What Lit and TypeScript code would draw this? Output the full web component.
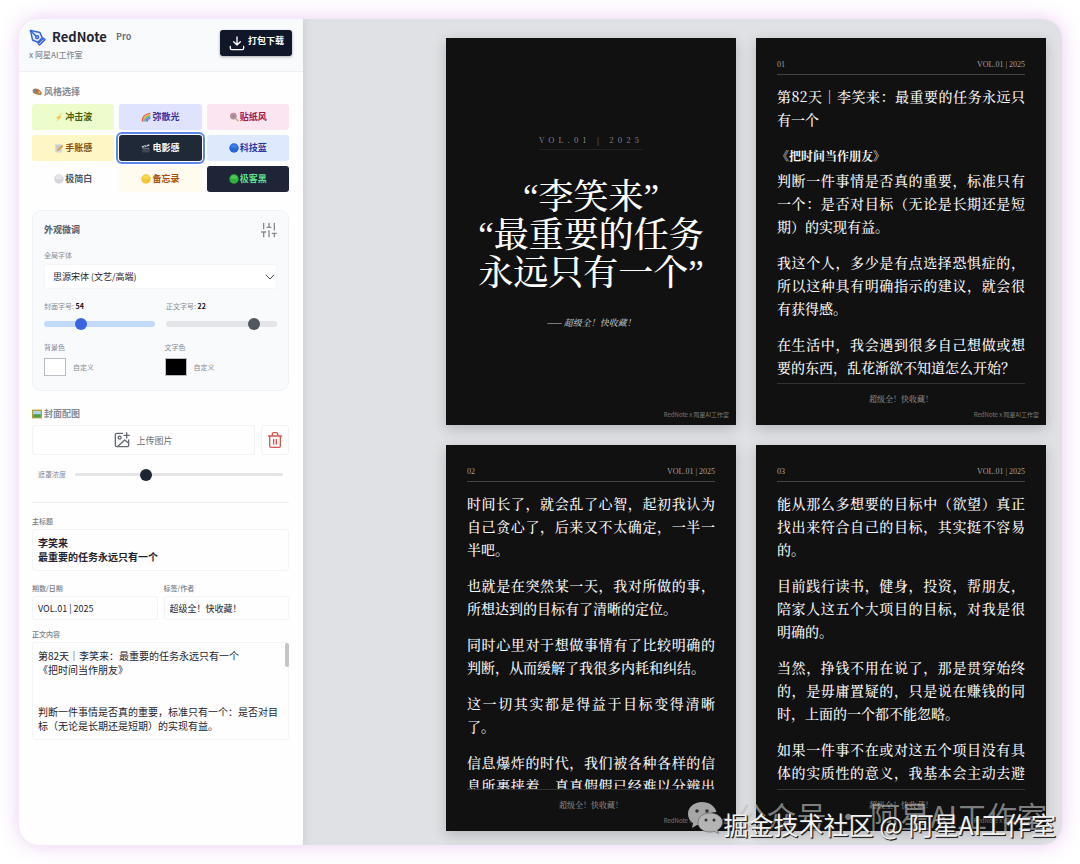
import { LitElement, html, css, svg, nothing } from "lit";
import { customElement, property } from "lit/decorators.js";

interface Theme {
  name: string;
  icon: unknown;
  tone: string;
}

const THEMES: Theme[] = [
  { name: "冲击波", tone: "lime", icon: svg`<path d="M13 1 3 10h4l-3 5 9-8H9z" fill="#f5c04a" stroke="#f7dc9a" stroke-width=".6"/>` },
  {
    name: "弥散光",
    tone: "indigo",
    icon: svg`<g fill="none" stroke-width="2"><path d="M2 15C2 8 7 3 15 2" stroke="#e8503a"/><path d="M4 15C4 9 8 5 15 4" stroke="#f5a623"/><path d="M6 15C6 10 10 7 15 6" stroke="#5cb85c"/><path d="M8 15C8 11 11 9 15 8" stroke="#3c8ee0"/><path d="M10 15C10 12 12 11 15 10" stroke="#8a5fd0"/></g>`,
  },
  {
    name: "贴纸风",
    tone: "pink",
    icon: svg`<path d="m9 9 6 5.500" stroke="#b59a55" stroke-width="1.800"/><circle cx="7" cy="6.500" r="5.500" fill="#c58aa2"/><path d="M7 6.500c2-3 5 0 2.500 2.500S2 8 4 4.500" fill="none" stroke="#6fb77d" stroke-width="1.600"/><circle cx="7" cy="6.500" r="1.500" fill="#8b6fb0"/>`,
  },
  {
    name: "手账感",
    tone: "yellow",
    icon: svg`<path d="M2 2h11v13H2z" fill="#d3d6dc"/><path d="M4 5h7M4 8h5M4 11h4" stroke="#9a9fa8" stroke-width=".8"/><path d="m5 13 1-3 7-7 2 2-7 7z" fill="#dc9f3c"/>`,
  },
  {
    name: "电影感",
    tone: "film",
    icon: svg`<path d="M2 7h12v8H2z" fill="#3d4652"/><path d="m1 5 12-3 .7 2.500L2 7.500z" fill="#c7ccd3"/><path d="m4 4.200 2 2M8 3.200l2 2" stroke="#39414d" stroke-width="1.400"/><path d="M3 9h10" stroke="#7b8591"/>`,
  },
  { name: "科技蓝", tone: "blue", icon: svg`<circle cx="8" cy="8" r="7.500" fill="#2468d8"/><ellipse cx="8" cy="5" rx="5" ry="3" fill="#3f7ee6"/>` },
  { name: "极简白", tone: "plain", icon: svg`<circle cx="8" cy="8" r="7.500" fill="#d5d6da"/><ellipse cx="8" cy="5" rx="5" ry="3.500" fill="#e4e5e8"/>` },
  { name: "备忘录", tone: "memo", icon: svg`<circle cx="8" cy="8" r="7.500" fill="#f4c531"/><ellipse cx="8" cy="5" rx="5" ry="3" fill="#f9d751"/>` },
  { name: "极客黑", tone: "geek", icon: svg`<circle cx="8" cy="8" r="7.500" fill="#2fb13f"/><ellipse cx="8" cy="5" rx="5" ry="3" fill="#4cc655"/>` },
];

interface Block {
  heading?: boolean;
  text: string;
}

const PAGES: Block[][] = [
  [
    { text: "第82天｜李笑来：最重要的任务永远只有一个" },
    { text: "《把时间当作朋友》", heading: true },
    { text: "判断一件事情是否真的重要，标准只有一个：是否对目标（无论是长期还是短期）的实现有益。" },
    { text: "我这个人，多少是有点选择恐惧症的，所以这种具有明确指示的建议，就会很有获得感。" },
    { text: "在生活中，我会遇到很多自己想做或想要的东西，乱花渐欲不知道怎么开始？" },
  ],
  [
    { text: "时间长了，就会乱了心智，起初我认为自己贪心了，后来又不太确定，一半一半吧。" },
    { text: "也就是在突然某一天，我对所做的事，所想达到的目标有了清晰的定位。" },
    { text: "同时心里对于想做事情有了比较明确的判断，从而缓解了我很多内耗和纠结。" },
    { text: "这一切其实都是得益于目标变得清晰了。" },
    { text: "信息爆炸的时代，我们被各种各样的信息所裹挟着，真真假假已经难以分辨出来。" },
  ],
  [
    { text: "能从那么多想要的目标中（欲望）真正找出来符合自己的目标，其实挺不容易的。" },
    { text: "目前践行读书，健身，投资，帮朋友，陪家人这五个大项目的目标，对我是很明确的。" },
    { text: "当然，挣钱不用在说了，那是贯穿始终的，是毋庸置疑的，只是说在赚钱的同时，上面的一个都不能忽略。" },
    { text: "如果一件事不在或对这五个项目没有具体的实质性的意义，我基本会主动去避免。" },
  ],
];

const [opening, book, ...rest] = PAGES.flat().map((b) => b.text);
const ARTICLE = `${opening}\n${book}\n\n\n${rest.join("\n\n")}`;
const ISSUE = "VOL.01 | 2025";
const AUTHOR = "超级全！快收藏！";

@customElement("note-card")
export class NoteCard extends LitElement {
  @property() number = "";
  @property({ attribute: false }) blocks: Block[] | null = null;

  static styles = css`
    :host {
      display: flex;
      flex-direction: column;
      box-sizing: border-box;
      aspect-ratio: 3 / 4;
      min-width: 0;
      padding: 0 21px 5px;
      background: #111;
      color: #f6f6f6;
      box-shadow: 0 4px 12px rgba(30, 35, 45, 0.22);
      font-family: "Noto Serif CJK SC", "Liberation Serif", serif;
      font-weight: 500;
    }
    .top {
      display: flex;
      justify-content: space-between;
      margin-top: 20px;
      padding-bottom: 2px;
      border-bottom: 1px solid #444;
      color: #a0a0a0;
      font-family: "Liberation Serif", serif;
      font-size: 8px;
      line-height: 14px;
      font-weight: 400;
    }
    .body {
      flex: 1 1 0;
      min-height: 0;
      overflow: hidden;
      padding-top: 10px;
      font-size: 14px;
      line-height: 23px;
      text-align: justify;
    }
    p {
      margin: 0 0 13px;
    }
    h3 {
      margin: 0 0 2px;
      font-size: 12px;
      line-height: 23px;
      font-weight: 700;
    }
    .foot {
      padding-top: 8px;
      border-top: 1px solid #333;
      color: #8c8c8c;
      font-size: 8px;
      line-height: 14px;
      text-align: center;
    }
    .brand {
      margin: 4px -14px 0 0;
      color: #7a7a7a;
      font: 6px/10px "Noto Sans CJK SC", sans-serif;
      text-align: right;
    }
    .cover {
      flex: 1;
      display: flex;
      flex-direction: column;
      align-items: center;
      justify-content: center;
      padding-top: 19px;
    }
    .issue {
      padding-bottom: 2px;
      border-bottom: 1px solid #222;
      color: #909090;
      font-size: 8px;
      line-height: 14px;
      letter-spacing: 4px;
      font-weight: 400;
    }
    h1 {
      margin: 29px 0 23px;
      color: #fff;
      font-family: "Liberation Serif", "Noto Serif CJK SC", serif;
      font-size: 35px;
      line-height: 38px;
      font-weight: 500;
      text-align: center;
      white-space: nowrap;
    }
    .author {
      color: #c4c4c4;
      font-size: 9px;
      line-height: 14px;
      font-style: italic;
    }
  `;

  render() {
    return html`
      ${this.blocks
        ? html`
            <header class="top"><span>${this.number}</span><span>${ISSUE}</span></header>
            <div class="body">
              ${this.blocks.map((b) => (b.heading ? html`<h3>${b.text}</h3>` : html`<p>${b.text}</p>`))}
            </div>
            <footer class="foot">${AUTHOR}</footer>
          `
        : html`
            <div class="cover">
              <span class="issue">${ISSUE}</span>
              <h1>“李笑来”<br />“最重要的任务<br />永远只有一个”</h1>
              <span class="author">—— ${AUTHOR}</span>
            </div>
          `}
      <div class="brand">RedNote x 阿星AI工作室</div>
    `;
  }
}

@customElement("app-root")
export class AppRoot extends LitElement {
  static styles = css`
    :host {
      display: block;
      position: relative;
      box-sizing: border-box;
      min-height: 100vh;
      padding: 19px 18px 19px 19px;
      background: #fff;
      font-family: "Noto Sans CJK SC", sans-serif;
      color: #1f2430;
    }
    * {
      box-sizing: border-box;
    }
    button,
    input,
    select,
    textarea {
      margin: 0;
      font-family: inherit;
      color: inherit;
    }
    svg {
      display: block;
      flex: none;
    }
    .frame {
      display: flex;
      min-height: calc(100vh - 38px);
      border-radius: 20px;
      overflow: hidden;
      background: #e0e1e4;
      box-shadow: 0 0 20px rgba(200, 120, 220, 0.38);
    }
    .side {
      flex: 0 0 284px;
      background: #fefefe;
      box-shadow: 1px 0 8px rgba(60, 70, 90, 0.14);
    }
    .head {
      display: flex;
      justify-content: space-between;
      align-items: flex-start;
      padding: 8px 11px 8px 10px;
      border-bottom: 1px solid #eceef1;
      background: #f9fafc;
    }
    .logo {
      display: flex;
      align-items: center;
      gap: 6px;
      line-height: 20px;
    }
    .name {
      font-size: 13px;
      font-weight: 700;
    }
    .pro {
      margin-left: 3px;
      color: #6d727b;
      font-size: 9px;
      font-weight: 700;
    }
    .by {
      margin: 3px 0;
      color: #858a93;
      font-size: 8px;
      line-height: 10px;
      font-weight: 500;
    }
    .download {
      display: flex;
      align-items: center;
      gap: 3px;
      height: 26px;
      margin-top: 3px;
      padding: 0 8px 0 9px;
      border: 0;
      border-radius: 3px;
      background: #0f1729;
      box-shadow: 0 1px 3px rgba(15, 23, 41, 0.35);
      color: #fff;
      font-size: 9px;
      line-height: 20px;
      font-weight: 700;
    }
    .download span {
      padding-bottom: 4px;
    }
    .content {
      padding: 13px 14px 13px 13px;
    }
    .title {
      display: flex;
      align-items: center;
      gap: 2px;
      margin: 0;
      color: #858a93;
      font-size: 9px;
      line-height: 14px;
      font-weight: 700;
    }
    .themes {
      display: grid;
      grid-template-columns: repeat(3, 1fr);
      gap: 5px;
      margin: 5px 0 18px;
    }
    .theme {
      display: flex;
      align-items: center;
      justify-content: center;
      gap: 1px;
      height: 26px;
      padding: 0;
      border: 0;
      border-radius: 3px;
      font-size: 9px;
      line-height: 14px;
      font-weight: 700;
    }
    .lime { background: #ecfccb; color: #3f6212; }
    .indigo { background: #e0e3fd; color: #3730a3; }
    .pink { background: #fae5f1; color: #9d174d; }
    .yellow { background: #fef6c4; color: #854d0e; }
    .blue { background: #dfe9fd; color: #2738a5; }
    .plain { background: #fefefe; color: #4b5563; }
    .memo { background: #fffbee; color: #a9500f; }
    .geek { background: #1e2536; color: #5fdc8c; }
    .film {
      background: #1f2937;
      color: #fff;
      box-shadow: 0 0 0 1px #fff, 0 0 0 3px #5b88ea;
    }
    .panel {
      margin-bottom: 16px;
      padding: 11px 11px 14px;
      border: 1px solid #eff1f4;
      border-radius: 9px;
      background: #f9fafc;
    }
    .panel-head {
      display: flex;
      justify-content: space-between;
      align-items: center;
      height: 16px;
      margin-bottom: 12px;
    }
    .panel-head h2 {
      margin: 0;
      color: #555b66;
      font-size: 9px;
      line-height: 14px;
      font-weight: 700;
    }
    .label {
      display: block;
      color: #868b94;
      font-size: 7px;
      line-height: 10px;
    }
    .label b {
      color: #111;
      font-weight: 700;
    }
    .picker {
      display: grid;
      align-items: center;
      margin: 4px 0 12px;
    }
    .picker > * {
      grid-area: 1 / 1;
    }
    .picker svg {
      justify-self: end;
      margin-right: 2px;
      pointer-events: none;
    }
    select {
      appearance: none;
      width: 100%;
      height: 25px;
      padding: 0 20px 0 8px;
      border: 1px solid #f4f5f7;
      border-radius: 3px;
      background: #fff;
      font-size: 9px;
      line-height: 14px;
    }
    .pair {
      display: grid;
      grid-template-columns: 1fr 1fr;
      gap: 11px;
    }
    .range {
      appearance: none;
      display: block;
      width: 100%;
      height: 12px;
      background: none;
      --track: #e4e5e8;
      --thumb: #52565f;
    }
    .range::-webkit-slider-runnable-track {
      height: 6px;
      border-radius: 3px;
      background: var(--track);
    }
    .range::-webkit-slider-thumb {
      appearance: none;
      width: 12px;
      height: 12px;
      margin-top: -3px;
      border-radius: 50%;
      background: var(--thumb);
    }
    .range.azure {
      --track: #c3d9fb;
      --thumb: #3b66e0;
    }
    .range.thin {
      --thumb: #1d2433;
    }
    .range.thin::-webkit-slider-runnable-track {
      height: 3px;
    }
    .range.thin::-webkit-slider-thumb {
      margin-top: -4px;
    }
    .pair .range {
      margin-top: 7px;
    }
    .colors {
      margin-top: 12px;
      gap: 8px;
    }
    .swatch {
      display: flex;
      align-items: center;
      gap: 7px;
      margin-top: 6px;
    }
    .swatch input {
      width: 22px;
      height: 18px;
      padding: 0;
      border: 1px solid #b9bcc2;
      background: none;
    }
    .swatch input::-webkit-color-swatch-wrapper {
      padding: 0;
    }
    .swatch input::-webkit-color-swatch {
      border: 0;
    }
    .upload-row {
      display: flex;
      gap: 6px;
      margin: 4px 0 13px;
    }
    .upload,
    .trash {
      display: flex;
      align-items: center;
      justify-content: center;
      gap: 6px;
      height: 30px;
      padding: 0;
      border: 1px solid #f1f2f4;
      border-radius: 3px;
      background: #fefefe;
      color: #6a6f78;
      font-size: 9px;
    }
    .upload {
      flex: 1;
    }
    .trash {
      flex: 0 0 28px;
    }
    .mask {
      display: flex;
      align-items: center;
      gap: 9px;
      padding: 0 6px 22px;
      border-bottom: 1px solid #eceef0;
      margin-bottom: 13px;
    }
    .mask .label {
      flex: none;
    }
    .field {
      display: block;
      width: 100%;
      margin-top: 3px;
      border: 1px solid #f3f4f6;
      border-radius: 3px;
      background: #fefefe;
      outline: 0;
    }
    .strong {
      color: #777c85;
      font-weight: 500;
    }
    input.field {
      height: 24px;
      padding: 0 5px;
      font-size: 9px;
    }
    textarea.field {
      resize: none;
      padding: 6px 5px;
      font-size: 10px;
      line-height: 14px;
    }
    .headline {
      height: 42px;
      margin-bottom: 12px;
      font-weight: 700;
    }
    .meta {
      gap: 6px;
      margin-bottom: 9px;
    }
    .scroller {
      position: relative;
    }
    .article {
      height: 98px;
      overflow-y: scroll;
      scrollbar-width: none;
    }
    .thumb {
      position: absolute;
      top: 1px;
      right: 0;
      width: 4px;
      height: 24px;
      border-radius: 2px;
      background: #c4c5c8;
    }
    .preview {
      flex: 1;
      display: grid;
      grid-template-columns: repeat(2, minmax(0, 290px));
      justify-content: end;
      align-content: start;
      gap: 20px;
      padding: 19px 16px 13px;
    }
    .wechat {
      position: absolute;
      right: 33px;
      bottom: 31px;
      display: flex;
      align-items: center;
      gap: 14px;
      color: rgba(190, 190, 190, 0.65);
      font-size: 30px;
      line-height: 36px;
      white-space: nowrap;
    }
    .wechat svg {
      margin-bottom: -6px;
    }
    .credit {
      position: absolute;
      right: 24px;
      bottom: 22px;
      color: #f2f2f2;
      font-size: 25px;
      line-height: 36px;
      white-space: nowrap;
      text-shadow: 1px 1px 1px #222, 1px 1px 0 #333;
    }
  `;

  private header() {
    return html`
      <header class="head">
        <div>
          <div class="logo">
            <svg width="17" height="17" viewBox="0 0 24 24" fill="none" stroke="#3461d6" stroke-width="2" stroke-linecap="round" stroke-linejoin="round">
              <path d="M2 2 15.500 5l3.300 7.500-6.300 6.300L5 15.500z" fill="#dfe8fc" />
              <path d="m2 2 7.800 7.800" />
              <circle cx="11.500" cy="11.500" r="2" />
              <path d="m13 20.500 7.500-7.500 2 2-7.500 7.500z" />
            </svg>
            <span class="name">RedNote</span><span class="pro">Pro</span>
          </div>
          <div class="by">x 阿星AI工作室</div>
        </div>
        <button class="download">
          <svg width="16" height="16" viewBox="0 0 24 24" fill="none" stroke="#fff" stroke-width="2" stroke-linecap="round" stroke-linejoin="round">
            <path d="M12 3v12M7 10l5 5 5-5M2 17v3a2 2 0 0 0 2 2h16a2 2 0 0 0 2-2v-3" />
          </svg>
          <span>打包下载</span>
        </button>
      </header>
    `;
  }

  private appearance() {
    return html`
      <section class="panel">
        <div class="panel-head">
          <h2>外观微调</h2>
          <svg width="16" height="16" viewBox="0 0 24 24" fill="none" stroke="#858a93" stroke-width="2" stroke-linecap="round">
            <path d="M4 2v8M4 15v7M12 2v6M12 13v9M20 2v10M20 17v5M1 15h6M9 8h6M17 17h6" />
          </svg>
        </div>
        <label class="label" for="font">全局字体</label>
        <div class="picker">
          <select id="font"><option>思源宋体 (文艺/高端)</option></select>
          <svg width="10" height="10" viewBox="0 0 10 10" fill="none" stroke="#4a4f58" stroke-linecap="round" stroke-linejoin="round"><path d="m1 3 4 4 4-4" /></svg>
        </div>
        <div class="pair">
          <div>
            <label class="label" for="cover-size">封面字号: <b>54</b></label>
            <input class="range azure" id="cover-size" type="range" min="30" max="106" .value=${"54"} />
          </div>
          <div>
            <label class="label" for="body-size">正文字号: <b>22</b></label>
            <input class="range" id="body-size" type="range" min="12" max="24" .value=${"22"} />
          </div>
        </div>
        <div class="pair colors">
          ${[
            ["bg", "背景色", "#ffffff"],
            ["fg", "文字色", "#000000"],
          ].map(
            ([id, label, value]) => html`
              <div>
                <label class="label" for=${id}>${label}</label>
                <div class="swatch"><input id=${id} type="color" .value=${value} /><span class="label">自定义</span></div>
              </div>
            `
          )}
        </div>
      </section>
    `;
  }

  private cover() {
    return html`
      <h2 class="title">
        <svg width="10" height="10" viewBox="0 0 16 16"><path d="M0 1h16v14H0z" fill="#b79a35" /><path d="M2 3h12v10H2z" fill="#a5d8e6" /><path d="M2 9c4-3 7 1 12-1v5H2z" fill="#4c9e46" /></svg>
        封面配图
      </h2>
      <div class="upload-row">
        <button class="upload">
          <svg width="16" height="16" viewBox="0 0 24 24" fill="none" stroke="#666b74" stroke-width="2" stroke-linecap="round" stroke-linejoin="round">
            <path d="M13 2H4a2 2 0 0 0-2 2v16a2 2 0 0 0 2 2h16a2 2 0 0 0 2-2v-8M19 1v8M15 5h8M5 22 16 12l6 5" />
            <circle cx="8.500" cy="8.500" r="2.200" />
          </svg>
          上传图片
        </button>
        <button class="trash" aria-label="删除图片">
          <svg width="16" height="16" viewBox="0 0 24 24" fill="none" stroke="#d6564f" stroke-width="2" stroke-linecap="round" stroke-linejoin="round">
            <path d="M2 6h20M4 6v15a2 2 0 0 0 2 2h12a2 2 0 0 0 2-2V6M8 6V3a2 2 0 0 1 2-2h4a2 2 0 0 1 2 2v3M10 11v7M14 11v7" />
          </svg>
        </button>
      </div>
      <div class="mask">
        <label class="label" for="mask">遮罩浓度</label>
        <input class="range thin" id="mask" type="range" min="0" max="100" .value=${"33"} />
      </div>
    `;
  }

  private fields() {
    return html`
      <label class="label strong" for="headline">主标题</label>
      <textarea class="field headline" id="headline" .value=${"李笑来\n最重要的任务永远只有一个"}></textarea>
      <div class="pair meta">
        <div>
          <label class="label strong" for="issue">期数/日期</label>
          <input class="field" id="issue" .value=${ISSUE} />
        </div>
        <div>
          <label class="label strong" for="author">标签/作者</label>
          <input class="field" id="author" .value=${AUTHOR} />
        </div>
      </div>
      <label class="label strong" for="article">正文内容</label>
      <div class="scroller">
        <textarea class="field article" id="article" .value=${ARTICLE}></textarea>
        <span class="thumb"></span>
      </div>
    `;
  }

  render() {
    return html`
      <div class="frame">
        <aside class="side">
          ${this.header()}
          <div class="content">
            <h2 class="title">
              <svg width="10" height="10" viewBox="0 0 16 16">
                <path d="M1 6c0-4 6-5 10-2s6 6 4 8-4 0-6 0-2 0-4-1-4-1-4-5z" fill="#b47a4c" />
                <circle cx="4" cy="6" r="1.600" fill="#3f8fe0" /><circle cx="8" cy="5.500" r="1.600" fill="#e34b3d" /><circle cx="12" cy="8.500" r="1.600" fill="#f3c63b" /><circle cx="5.500" cy="9" r="1.400" fill="#4aa84d" />
              </svg>
              风格选择
            </h2>
            <div class="themes">
              ${THEMES.map(
                (t) => html`
                  <button class="theme ${t.tone}" aria-pressed=${t.tone === "film" ? "true" : nothing}>
                    <svg width="10" height="10" viewBox="0 0 16 16">${t.icon}</svg>${t.name}
                  </button>
                `
              )}
            </div>
            ${this.appearance()} ${this.cover()} ${this.fields()}
          </div>
        </aside>
        <main class="preview">
          <note-card></note-card>
          ${PAGES.map((blocks, i) => html`<note-card number=${"0" + (i + 1)} .blocks=${blocks}></note-card>`)}
        </main>
      </div>
      <div class="wechat">
        <svg width="36" height="34" viewBox="0 0 36 34">
          <path fill="#a6a6a6" d="M15 1C7 1 1 6 1 13c0 4 2 7 5 9l-1 5 5-3c2 .6 4 .8 7 .6C16 16 22 11 29.500 11 28 5 22 1 15 1z" />
          <path fill="#b4b4b4" stroke="#555" stroke-width=".6" d="M23 12c-7 0-12 4-12 9.500S16 31 23 31c1.500 0 3-.2 4.500-.7l4 2.200-1-3.500c3-2 5-4.500 5-7.500C35.500 16 30 12 23 12z" />
          <g fill="#333"><circle cx="10" cy="10" r="1.800" /><circle cx="20" cy="10" r="1.800" /><circle cx="19" cy="19" r="1.500" /><circle cx="27" cy="19" r="1.500" /></g>
        </svg>
        <span>公众号 · 阿星AI工作室</span>
      </div>
      <div class="credit">掘金技术社区 @ 阿星AI工作室</div>
    `;
  }
}
